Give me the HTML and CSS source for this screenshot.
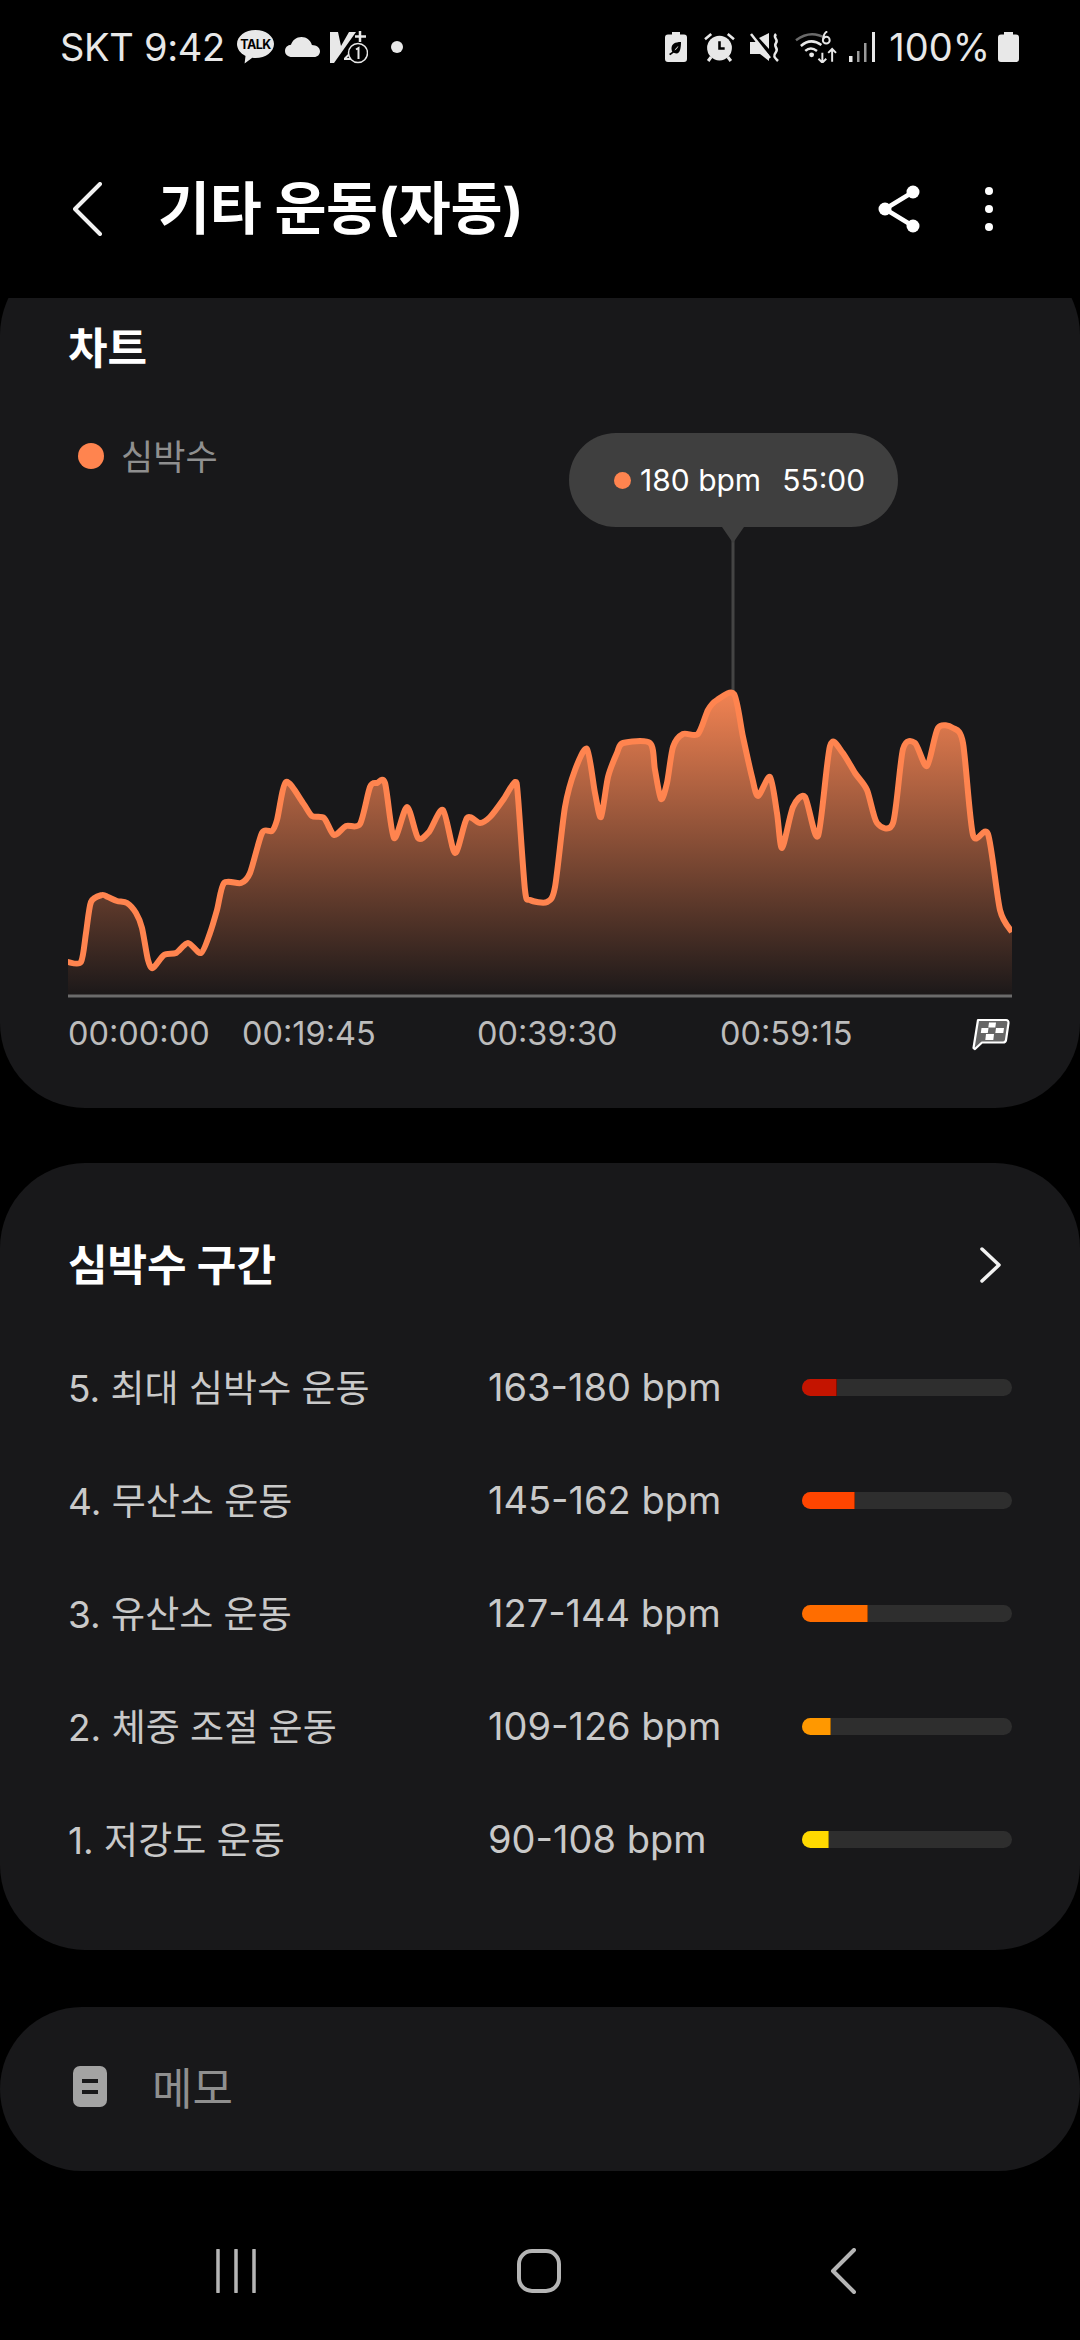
FILE: index.html
```html
<!DOCTYPE html>
<html lang="ko">
<head>
<meta charset="utf-8">
<title>기타 운동(자동)</title>
<link rel="stylesheet" href="styles.css">
</head>
<body>
<div class="phone">
  <div class="status">
    <div class="status-group">
      <span class="status-text">SKT 9:42</span>
      <svg class="ic-talk" viewBox="0 0 37 34"><path fill="#e8e8e8" d="M18.5 0C8.3 0 0 6.2 0 14c0 5 3.400 9.400 8.500 11.900L7.600 33.500 15.300 27.800c1 .1 2.100.2 3.200.2C28.700 28 37 21.800 37 14S28.700 0 18.500 0z"/><text x="18.500" y="19" text-anchor="middle" class="talk-label">TALK</text></svg>
      <svg class="ic-cloud" viewBox="0 0 35 20"><path fill="#e8e8e8" d="M7 20C3 20 0 17.500 0 14s2.700-6 6-6.200C7.300 3.200 11.500 0 16.500 0c5 0 9.200 3.300 10.400 7.900C31.500 8 35 10.500 35 14.200 35 17.600 32.500 20 29 20z"/></svg>
      <svg class="ic-volte" viewBox="0 0 38 33"><path fill="#e8e8e8" d="M0 1H8L11 15 19 1H26L4 32H0z"/><path fill="#e8e8e8" d="M14 27l6-6v2l-3 4h4v2h-7z"/><path stroke="#e8e8e8" stroke-width="2.500" d="M30 0v11M25 5.500h11"/><circle cx="28" cy="22" r="9.500" fill="#000" stroke="#e8e8e8" stroke-width="1.500"/><path stroke="#e8e8e8" stroke-width="2" fill="none" d="M26 18.500l2.500-1.500v11"/></svg>
      <span class="status-dot"></span>
    </div>
    <div class="status-group">
      <svg class="ic-saver" viewBox="0 0 22 30"><path fill="#e8e8e8" fill-rule="evenodd" d="M7 0h8v2.500h4a3 3 0 0 1 3 3V27a3 3 0 0 1-3 3H3a3 3 0 0 1-3-3V5.500a3 3 0 0 1 3-3h4zM16 10c-6 0-9.500 2-9.500 6.500 0 1.300.3 2.300.8 3.200L4 22l1.300 1.300 3.300-2.600c1 .6 2 .8 3 .8C15 21.500 16 16 16 10zM9.500 18.500c1-2 2.500-3.500 4-4.500-1 2-2.300 3.500-4 4.500z"/></svg>
      <svg class="ic-alarm" viewBox="0 0 30 29"><circle cx="15" cy="15.500" r="12" fill="#e8e8e8"/><path d="M15 9v7h5" fill="none" stroke="#000" stroke-width="2.500"/><path d="M1 7l6-5M29 7l-6-5" stroke="#e8e8e8" stroke-width="2.500" fill="none"/><path d="M7 24l-3 4M23 24l3 4" stroke="#e8e8e8" stroke-width="3" fill="none"/></svg>
      <svg class="ic-mute" viewBox="0 0 30 29"><path fill="#e8e8e8" d="M0 9h5l1-1 13 14v6l-9-7H0zM9 5l10-5v16z"/><path stroke="#e8e8e8" stroke-width="2.500" d="M1 1l19 24" fill="none"/><path stroke="#e8e8e8" stroke-width="2.500" fill="none" d="M26 1c-4 4 3 5 0 9s3 5 0 9-2 5 2 9"/></svg>
      <svg class="ic-wifi" viewBox="0 0 44 32"><path d="M1 9Q16-2 31 7" fill="none" stroke="#6a6a6a" stroke-width="2.500"/><path d="M6 15Q16 6 27 14M10.500 20Q16 15 22.500 20" fill="none" stroke="#e8e8e8" stroke-width="2.500"/><circle cx="17" cy="24" r="2.500" fill="#e8e8e8"/><path d="M28 32V22M24 28l4 4 4-4M38 31V18M34 22l4-4 4 4" fill="none" stroke="#e8e8e8" stroke-width="2"/><circle cx="32" cy="9" r="3.500" fill="none" stroke="#e8e8e8" stroke-width="2"/><path d="M29 8c0-4 2-7 4-8" fill="none" stroke="#e8e8e8" stroke-width="2"/></svg>
      <svg class="ic-signal" viewBox="0 0 27 30"><path fill="#e8e8e8" d="M0 24h3.500v6H0z"/><path fill="#9a9a9a" d="M8 19h2.500v11H8zM15 11h2.500v19H15z"/><path fill="#e8e8e8" d="M23 0h3v30h-3z"/></svg>
      <span class="status-text status-pct">100%</span>
      <svg class="ic-battery" viewBox="0 0 21 30"><path fill="#e8e8e8" d="M6 0h9v2.500h3a3 3 0 0 1 3 3V27a3 3 0 0 1-3 3H3a3 3 0 0 1-3-3V5.500a3 3 0 0 1 3-3h3z"/></svg>
    </div>
  </div>

  <div class="appbar">
    <svg class="ic-back" viewBox="0 0 30 54"><path d="M27 2L2 27l25 25" fill="none" stroke="#f2f2f2" stroke-width="4" stroke-linecap="round" stroke-linejoin="round"/></svg>
    <h1 class="appbar-title">기타 운동(자동)</h1>
    <svg class="ic-share" viewBox="0 0 42 48"><path d="M35 7L7 24l28 17" fill="none" stroke="#fff" stroke-width="4.500"/><circle cx="35" cy="7" r="6.500" fill="#fff"/><circle cx="7" cy="24" r="6.500" fill="#fff"/><circle cx="35" cy="41" r="6.500" fill="#fff"/></svg>
    <svg class="ic-more" viewBox="0 0 8 44"><circle cx="4" cy="4" r="4" fill="#fff"/><circle cx="4" cy="22" r="4" fill="#fff"/><circle cx="4" cy="40" r="4" fill="#fff"/></svg>
  </div>

  <div class="scroll">
    <section class="card card-chart">
      <h2 class="card-title">차트</h2>
      <div class="legend"><span class="legend-dot"></span><span class="legend-text">심박수</span></div>
      <div class="chart">
        <svg class="chart-svg" viewBox="68 476 944 524">
          <defs>
            <linearGradient id="area" gradientUnits="userSpaceOnUse" x1="0" y1="694" x2="0" y2="996">
              <stop offset="0" stop-color="#f08252"/>
              <stop offset="1" stop-color="#1b1819"/>
            </linearGradient>
          </defs>
          <line x1="733" y1="540" x2="733" y2="694" stroke="#444" stroke-width="3"/>
          <path id="hr-area" fill="url(#area)"/>
          <path id="hr-line" fill="none" stroke="#ff844f" stroke-width="6" stroke-linejoin="round"/>
          <line x1="68" y1="996" x2="1012" y2="996" stroke="#6b6b6b" stroke-width="3"/>
        </svg>
        <div class="tooltip">
          <span class="tooltip-dot"></span>
          <span class="tooltip-bpm">180 bpm</span>
          <span class="tooltip-time">55:00</span>
        </div>
      </div>
      <div class="axis">
        <span>00:00:00</span>
        <span>00:19:45</span>
        <span>00:39:30</span>
        <span>00:59:15</span>
        <svg class="ic-flag" viewBox="0 0 38 33"><path d="M6 2h28a2.500 2.500 0 0 1 2.500 3L34 22a3 3 0 0 1-3 2.500H10L3 31l-1.500-1z" fill="#666" stroke="#fff" stroke-width="2.200" stroke-linejoin="round"/><path fill="#fff" d="M17 4.500h7l-.7 5h-7zM9.500 10h7l-.7 5h-7zM24 10h8l-.7 5h-8zM14 16h8l-.7 6h-8z"/></svg>
      </div>
    </section>

    <section class="card card-zones">
      <div class="zones-head">
        <h2 class="card-title">심박수 구간</h2>
        <svg class="ic-next" viewBox="0 0 22 36"><path d="M2 2l17 16L2 34" fill="none" stroke="#f2f2f2" stroke-width="3.500" stroke-linecap="round" stroke-linejoin="round"/></svg>
      </div>
      <div class="zone"><span class="zone-name">5. 최대 심박수 운동</span><span class="zone-range">163-180 bpm</span><span class="track"><span class="fill fill-5" style="width:35px"></span></span></div>
      <div class="zone"><span class="zone-name">4. 무산소 운동</span><span class="zone-range">145-162 bpm</span><span class="track"><span class="fill fill-4" style="width:53px"></span></span></div>
      <div class="zone"><span class="zone-name">3. 유산소 운동</span><span class="zone-range">127-144 bpm</span><span class="track"><span class="fill fill-3" style="width:66px"></span></span></div>
      <div class="zone"><span class="zone-name">2. 체중 조절 운동</span><span class="zone-range">109-126 bpm</span><span class="track"><span class="fill fill-2" style="width:29px"></span></span></div>
      <div class="zone"><span class="zone-name">1. 저강도 운동</span><span class="zone-range">90-108 bpm</span><span class="track"><span class="fill fill-1" style="width:27px"></span></span></div>
    </section>

    <section class="card card-memo">
      <svg class="ic-memo" viewBox="0 0 34 41"><rect width="34" height="41" rx="7" fill="#a3a3a3"/><path d="M9 15h16M9 26h16" stroke="#18181a" stroke-width="4"/></svg>
      <span class="memo-text">메모</span>
    </section>
  </div>

  <nav class="navbar">
    <svg class="ic-recents" viewBox="0 0 40 44"><path d="M2 1v42M20 1v42M38 1v42" stroke="#b5b5b5" stroke-width="3.500" fill="none" stroke-linecap="round"/></svg>
    <svg class="ic-home" viewBox="0 0 44 44"><rect x="2" y="2" width="40" height="40" rx="13" fill="none" stroke="#b5b5b5" stroke-width="4"/></svg>
    <svg class="ic-navback" viewBox="0 0 26 46"><path d="M24 2L3 23l21 21" fill="none" stroke="#b5b5b5" stroke-width="4" stroke-linecap="round" stroke-linejoin="round"/></svg>
  </nav>
</div>
<script src="chart.js"></script>
</body>
</html>
```

FILE: styles.css
```css
* { box-sizing: border-box; }
html, body { margin: 0; padding: 0; background: #000; }
body { font-family: Inter, "Noto Sans CJK KR", sans-serif; color: #fff; }
.phone { width: 1080px; height: 2340px; display: flex; flex-direction: column; overflow: hidden; background: #000; }

.status { height: 94px; padding: 0 61px 0 60px; display: flex; justify-content: space-between; align-items: center; color: #e8e8e8; flex: none; }
.status-group { display: flex; align-items: center; }
.status-text { font-size: 38px; line-height: 40px; letter-spacing: -0.3px; }
.ic-talk { width: 37px; height: 34px; margin-left: 12px; }
.talk-label { font-size: 12.5px; font-weight: 700; fill: #000; letter-spacing: -.5px; }
.ic-cloud { width: 35px; height: 20px; margin-left: 11px; }
.ic-volte { width: 38px; height: 33px; margin-left: 10px; }
.status-dot { width: 12px; height: 12px; border-radius: 50%; background: #e8e8e8; margin-left: 23px; }
.ic-saver { width: 22px; height: 30px; }
.ic-alarm { width: 31px; height: 30px; margin-left: 17px; }
.ic-mute { width: 30px; height: 29px; margin-left: 15px; }
.ic-wifi { width: 43px; height: 32px; margin-left: 15px; }
.ic-signal { width: 27px; height: 30px; margin-left: 11px; }
.status-pct { margin-left: 13px; letter-spacing: 0; }
.ic-battery { width: 21px; height: 30px; margin-left: 8px; }

.appbar { height: 204px; flex: none; display: flex; align-items: center; padding: 26px 87px 0 73px; }
.ic-back { width: 30px; height: 54px; }
.appbar-title { font-size: 56.5px; font-weight: 700; line-height: 64px; margin: 0 0 0 55px; flex: 1; letter-spacing: -0.3px; }
.ic-share { width: 42px; height: 48px; margin-right: 65px; }
.ic-more { width: 8px; height: 44px; }

.scroll { height: 1904px; flex: none; overflow: hidden; display: flex; flex-direction: column; }
.card { background: #18181a; border-radius: 85px; flex: none; }
.card-chart { margin-top: -48px; height: 858px; padding: 73px 68px 0; }
.card-title { font-size: 43px; font-weight: 700; line-height: 50px; margin: 0; color: #fff; }
.legend { display: flex; align-items: center; gap: 17px; height: 40px; margin-top: 63px; padding-left: 10px; }
.legend-dot { width: 26px; height: 26px; border-radius: 50%; background: #ff844f; }
.legend-text { font-size: 35px; line-height: 40px; color: #8f8f8f; position: relative; top: 1px; }

.chart { position: relative; height: 524px; }
.chart-svg { display: block; width: 944px; height: 524px; }
.tooltip { position: absolute; left: 501px; top: -43px; width: 329px; height: 94px; border-radius: 47px; background: #3f3f3f; display: flex; align-items: center; padding-left: 45px; font-size: 30px; color: #fff; }
.tooltip::after { content: ""; position: absolute; left: 153px; top: 94px; width: 22px; height: 16px; background: #3f3f3f; clip-path: polygon(0 0, 100% 0, 50% 100%); }
.tooltip-dot { width: 17px; height: 17px; border-radius: 50%; background: #ff844f; margin-right: 9px; }
.tooltip-bpm { margin-right: 21px; }

.axis { display: grid; grid-template-columns: 174px 235px 243px 1fr 40px; align-items: center; height: 40px; margin-top: 14px; font-size: 32.5px; line-height: 40px; color: #bcbcbc; }
.ic-flag { width: 38px; height: 33px; justify-self: end; margin-right: 2px; }

.card-zones { margin-top: 55px; height: 787px; padding: 77px 68px 0; }
.zones-head { display: flex; justify-content: space-between; align-items: center; height: 50px; margin-bottom: 41px; }
.ic-next { width: 22px; height: 36px; margin-right: 10px; }
.zone { display: grid; grid-template-columns: 420px 314px 210px; align-items: center; height: 113px; font-size: 37px; color: #c9c9c9; }
.zone-name { padding-bottom: 3px; }
.zone-range { font-size: 38px; padding-bottom: 1px; }
.track { display: block; height: 17px; border-radius: 8.5px; background: #2e2e2e; overflow: hidden; }
.fill { display: block; height: 100%; border-right: 1px solid rgba(0, 0, 0, .35); }
.fill-5 { background: #c41400; }
.fill-4 { background: #ff4500; }
.fill-3 { background: #ff6d00; }
.fill-2 { background: #ff9800; }
.fill-1 { background: #ffd900; }

.card-memo { margin-top: 57px; height: 164px; border-radius: 82px; display: flex; align-items: center; padding-left: 73px; gap: 45px; }
.ic-memo { width: 34px; height: 41px; position: relative; top: -3px; }
.memo-text { font-size: 44px; line-height: 50px; color: #8f8f8f; }

.navbar { flex: 1; display: flex; align-items: center; padding: 0 0 0 216px; }
.ic-recents { width: 40px; height: 44px; }
.ic-home { width: 44px; height: 44px; margin-left: 261px; }
.ic-navback { width: 26px; height: 46px; margin-left: 269px; }
```

FILE: chart.js
```js
// Heart-rate samples, in the coordinates of the chart's viewBox.
var points = [[68,962],[81,962],[86,933],[91,902],[102,895],[108,897],[117,901],[127,903],[136,913],[142,928],[148,960],[153,968],[164,955],[176,953],[188,943],[201,953],[210,933],[217,910],[224,883],[241,883],[250,873],[262,833],[272,831],[277,820],[286,782],[303,803],[312,816],[324,818],[334,835],[346,826],[360,824],[370,787],[377,783],[385,783],[394,838],[407,807],[418,838],[429,832],[443,810],[455,853],[467,818],[480,823],[490,817],[503,800],[515,782],[518,797],[525,890],[530,900],[547,902],[555,887],[565,807],[575,770],[587,749],[595,793],[601,817],[608,777],[617,753],[623,743],[650,743],[655,770],[661,799],[667,783],[673,747],[683,734],[698,734],[708,710],[717,700],[734,694],[743,737],[752,777],[758,796],[770,777],[777,813],[782,848],[793,807],[805,797],[818,836],[830,746],[842,752],[855,773],[867,790],[877,823],[893,823],[903,749],[915,743],[927,766],[938,728],[953,728],[963,743],[973,835],[988,834],[1000,910],[1012,932]];

function smooth(pts) {
  var k = 0.8 / 6;
  var d = "M" + pts[0][0] + " " + pts[0][1];
  for (var i = 0; i < pts.length - 1; i++) {
    var p0 = pts[Math.max(i - 1, 0)], p1 = pts[i], p2 = pts[i + 1], p3 = pts[Math.min(i + 2, pts.length - 1)];
    d += "C" + (p1[0] + (p2[0] - p0[0]) * k).toFixed(1) + " " + (p1[1] + (p2[1] - p0[1]) * k).toFixed(1) +
         " " + (p2[0] - (p3[0] - p1[0]) * k).toFixed(1) + " " + (p2[1] - (p3[1] - p1[1]) * k).toFixed(1) +
         " " + p2[0] + " " + p2[1];
  }
  return d;
}

var line = smooth(points);
document.getElementById("hr-line").setAttribute("d", line);
document.getElementById("hr-area").setAttribute("d", line + "L1012 995L68 995Z");
```
